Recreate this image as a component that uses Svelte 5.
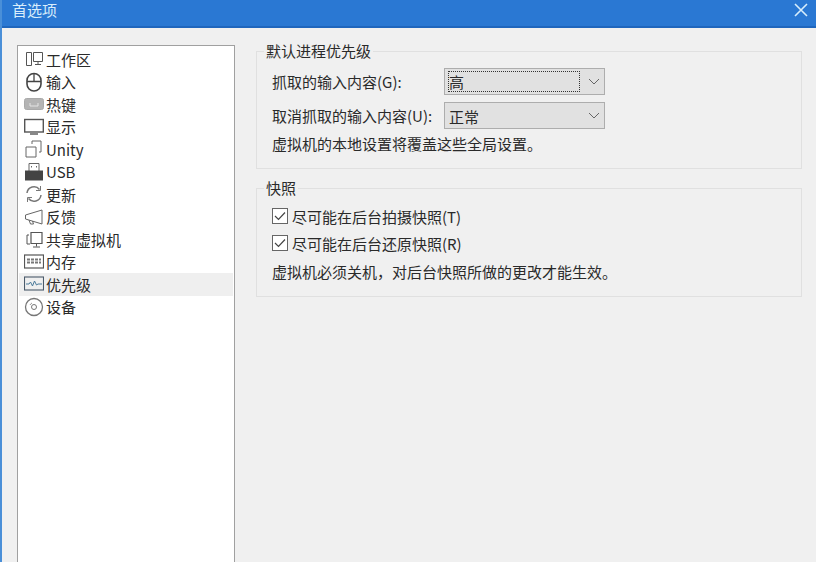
<script>
  const items = [
    ['工作区', 'workspace'], ['输入', 'mouse'], ['热键', 'key'], ['显示', 'display'],
    ['Unity', 'unity'], ['USB', 'usb'], ['更新', 'update'], ['反馈', 'feedback'],
    ['共享虚拟机', 'share'], ['内存', 'memory'], ['优先级', 'priority'], ['设备', 'device']
  ];
</script>

<div class="win">
  <header class="title">
    <span>首选项</span>
    <svg class="close" viewBox="0 0 14 14" width="14" height="14"><path d="M1 1 13 13M13 1 1 13" stroke="#d8eefc" stroke-width="1.6" fill="none"/></svg>
  </header>
  <div class="body">
    <ul class="list">
      {#each items as [label, icon]}
        <li class:sel={icon === 'priority'}>
          <svg viewBox="0 0 20 20" width="20" height="20" fill="none" stroke="#555" stroke-width="1">
            {#if icon === 'workspace'}
              <path d="M2.500 3.500h5v13h-5zM9.500 3.500h9v9h-9zM14 12.500v3M11 15.500h6"/>
            {:else if icon === 'mouse'}
              <rect x="3" y="1.500" width="14" height="17.500" rx="7" stroke="#444" stroke-width="1.600"/><path d="M3 9.500h14M10 1.500v8" stroke="#444" stroke-width="1.300"/>
            {:else if icon === 'key'}
              <rect x="0.500" y="4.500" width="19" height="11" rx="2" fill="#b4b4b4" stroke="#aaa"/><path d="M6 9v3h8V9" stroke="#e4e4e4"/>
            {:else if icon === 'display'}
              <rect x="0.700" y="2.500" width="18.600" height="12.500" stroke-width="1.400"/><path d="M6 17h8" stroke-width="1.400"/>
            {:else if icon === 'unity'}
              <path d="M2 8h10v10H2zM8 5V2h9v11h-2" stroke="#666"/>
            {:else if icon === 'usb'}
              <path d="M5 1.500h10v8H5z" stroke="#666"/><path d="M7.500 4v1.500M12.500 4v1.500" stroke="#666"/><rect x="1.500" y="9" width="17" height="9" fill="#444" stroke="#444"/>
            {:else if icon === 'update'}
              <path d="M3 9a7 7 0 0 1 12.500-3.500M17 11a7 7 0 0 1-12.500 3.500" stroke-width="1.500" stroke="#777"/><path d="M16.500 2v4.500H12M3.500 18v-4.500H8" stroke="#777"/>
            {:else if icon === 'feedback'}
              <path d="M1.500 8v4L18 17V3zM5 13l1.500 4h3l-1-3" stroke="#666"/>
            {:else if icon === 'share'}
              <path d="M7 3.500h11v11H7z" stroke-width="1.200"/><path d="M5 6H3v9h3M12.500 14.500v3M9 18h7"/>
            {:else if icon === 'memory'}
              <rect x="0.500" y="3" width="19" height="13" stroke-width="1.200"/><path d="M3 7.500h14M3 10.500h14" stroke-width="2" stroke="#777" stroke-dasharray="3 1"/>
            {:else if icon === 'priority'}
              <rect x="0.500" y="3" width="19" height="13" stroke="#4a5a6a" stroke-width="1.100"/><path d="M2 10h3l1.500-2 2 4 2-5 2 4 1.500-1H18" stroke="#4a7a9a"/>
            {:else}
              <circle cx="10" cy="10" r="8.500" stroke="#777" stroke-width="1.300"/><circle cx="10" cy="10" r="2.500" stroke="#777"/><path d="M6 8a4.500 4.500 0 0 1 2-2" stroke="#999"/>
            {/if}
          </svg>
          <span>{label}</span>
        </li>
      {/each}
    </ul>
    <div class="panel">
      <fieldset class="g1">
        <legend>默认进程优先级</legend>
        <div class="row">
          <span class="lab">抓取的输入内容(G):</span>
          <div class="combo"><span class="val focus">高</span><svg viewBox="0 0 12 7" width="12" height="7"><path d="M1 1l5 5 5-5" stroke="#666" fill="none"/></svg></div>
        </div>
        <div class="row second">
          <span class="lab">取消抓取的输入内容(U):</span>
          <div class="combo"><span class="val low">正常</span><svg viewBox="0 0 12 7" width="12" height="7"><path d="M1 1l5 5 5-5" stroke="#666" fill="none"/></svg></div>
        </div>
        <p>虚拟机的本地设置将覆盖这些全局设置。</p>
      </fieldset>
      <fieldset class="g2">
        <legend>快照</legend>
        <label class="chk"><svg viewBox="0 0 16 16" width="16" height="16"><rect x=".5" y=".5" width="15" height="15" fill="#fff" stroke="#666"/><path d="M3 8l3.500 3.500L13 4.500" stroke="#444" stroke-width="1.200" fill="none"/></svg>尽可能在后台拍摄快照(T)</label>
        <label class="chk"><svg viewBox="0 0 16 16" width="16" height="16"><rect x=".5" y=".5" width="15" height="15" fill="#fff" stroke="#666"/><path d="M3 8l3.500 3.500L13 4.500" stroke="#444" stroke-width="1.200" fill="none"/></svg>尽可能在后台还原快照(R)</label>
        <p>虚拟机必须关机，对后台快照所做的更改才能生效。</p>
      </fieldset>
    </div>
  </div>
</div>

<style>
  :global(body) { margin: 0; background: #f0f0f0; }
  .win {
    width: 816px; height: 562px; overflow: hidden; display: flex; flex-direction: column;
    box-sizing: border-box; border-left: 2px solid #4a8fd8;
    font: 15px "Noto Sans CJK SC", "Noto Sans", sans-serif; color: #2a2a2a;
    background: #f0f0f0;
  }
  .title {
    height: 28px; flex: none; margin-left: -2px; background: #2a78d3; color: #d9edfb;
    display: flex; align-items: center; justify-content: space-between;
    padding: 0 8px 6px 12px; box-sizing: border-box; font-size: 15px; line-height: 18px;
    border-bottom: 2px solid #1f66bd;
  }
  .body { flex: 1; display: flex; padding: 17px 14px 0 15px; gap: 21px; min-height: 0; }
  .list {
    width: 218px; flex: none; box-sizing: border-box; margin: 0; padding: 2px 1px 0 1px; list-style: none;
    background: #fff; border: 1px solid #a0a0a0; height: 530px;
  }
  li { height: 22.5px; display: flex; align-items: center; gap: 2px; padding-left: 5px; font-size: 15px; color: #2a2a2a; white-space: nowrap; }
  li.sel { background: #efefef; }
  .panel { flex: 1; display: flex; flex-direction: column; padding-top: 6px; gap: 19px; min-width: 0; }
  fieldset { margin: 0; padding: 0 0 0 15px; border: 1px solid #e0e0e0; position: relative; box-sizing: border-box; }
  legend { padding: 0 2px; margin-left: -8px; font-size: 15px; line-height: 20px; }
  .g1 { height: 128px; margin-top: -10px; }
  .g2 { height: 119px; margin-top: -10px; }
  .row { display: flex; align-items: center; height: 26px; margin-top: 7px; }
  .row.second { margin-top: 8px; }
  .lab { width: 172px; flex: none; white-space: nowrap; }
  .combo {
    width: 161px; height: 27px; box-sizing: border-box; background: #e1e1e1; border: 1px solid #adadad;
    display: flex; align-items: center; justify-content: space-between; padding: 0 4px 0 3px;
  }
  .val { flex: none; width: 129px; height: 21px; line-height: 21px; padding-left: 1px; box-sizing: border-box; font-size: 15px; }
  .val.low { line-height: 24px; }
  .val.focus { border: 1px dotted #333; line-height: 19px; padding-left: 0; width: 132px; }
  p { margin: 6px 0 0; line-height: 20px; white-space: nowrap; }
  .chk { display: flex; align-items: center; gap: 4px; height: 20px; margin-top: 7px; white-space: nowrap; }
  .g2 .chk:first-of-type { margin-top: 8px; }
  .g2 p { margin-top: 9px; }
</style>
